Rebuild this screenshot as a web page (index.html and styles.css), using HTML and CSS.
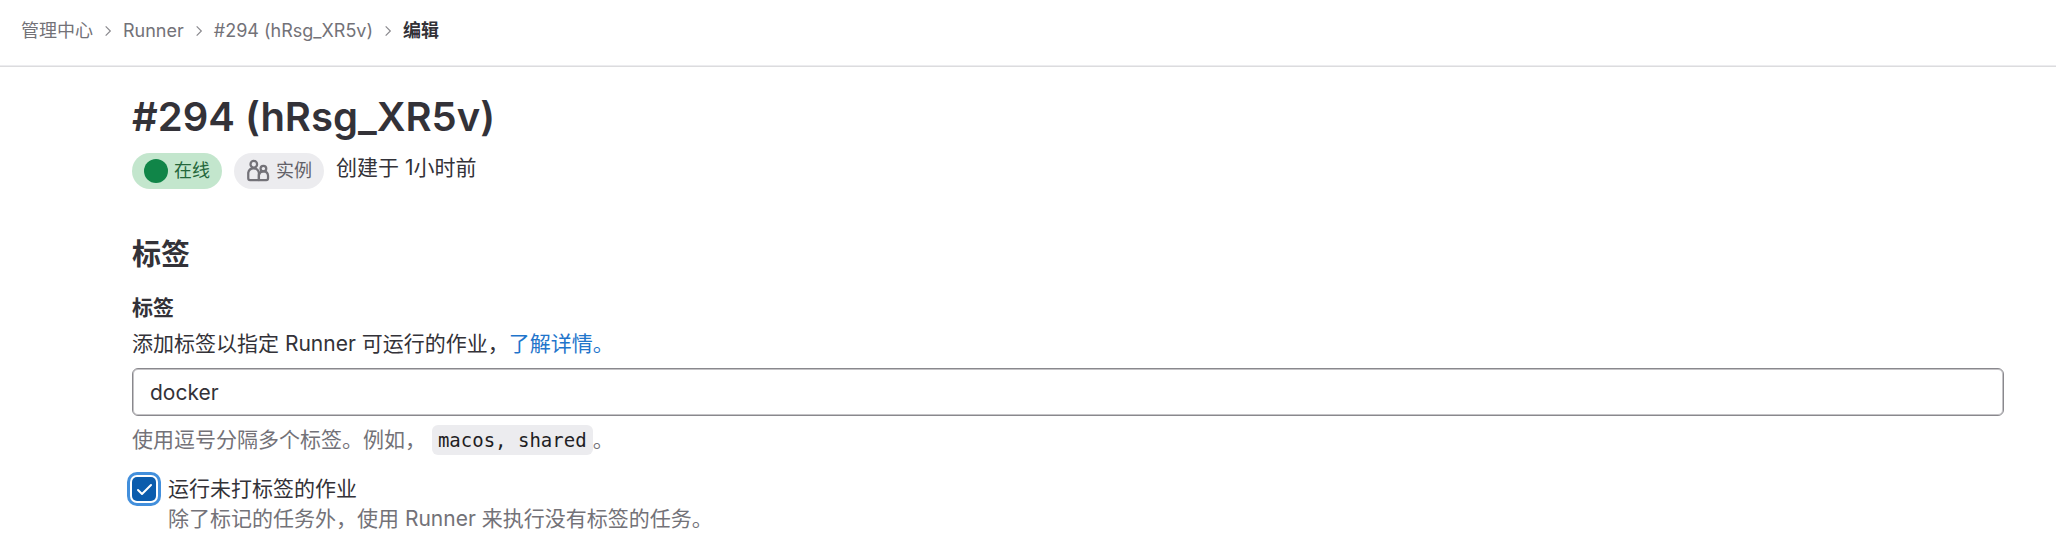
FILE: index.html
```html
<!DOCTYPE html>
<html lang="zh-CN">
<head>
    <meta charset="UTF-8">
    <meta name="viewport" content="width=device-width, initial-scale=1.0">
    <title>编辑 · #294 (hRsg_XR5v) · 管理中心</title>
    <link rel="stylesheet" href="styles.css">
</head>
<body>
    <header class="top-bar">
        <nav aria-label="面包屑">
            <ol class="breadcrumbs">
                <li><a href="#">管理中心</a></li>
                <li>
                    <svg class="chevron" viewBox="0 0 12 12" aria-hidden="true"><path d="M4 2l4 4-4 4"/></svg>
                    <a href="#">Runner</a>
                </li>
                <li>
                    <svg class="chevron" viewBox="0 0 12 12" aria-hidden="true"><path d="M4 2l4 4-4 4"/></svg>
                    <a href="#">#294 (hRsg_XR5v)</a>
                </li>
                <li>
                    <svg class="chevron" viewBox="0 0 12 12" aria-hidden="true"><path d="M4 2l4 4-4 4"/></svg>
                    <a class="current" href="#" aria-current="page">编辑</a>
                </li>
            </ol>
        </nav>
    </header>

    <main class="content">
        <h1>#294 (hRsg_XR5v)</h1>
        <div class="runner-meta">
            <span class="badge badge-success">
                <svg viewBox="0 0 16 16" aria-hidden="true"><circle cx="8" cy="8" r="8" fill="#108548"/></svg>
                在线
            </span>
            <span class="badge badge-muted">
                <svg viewBox="0 0 16 16" fill="none" stroke="#737278" stroke-width="1.5" stroke-linejoin="round" aria-hidden="true">
                    <circle cx="5.2" cy="3.5" r="2.2"/>
                    <path d="M8.6 14H2.700a1.200 1.200 0 0 1-1.200-1.200V9.200a3.600 3.600 0 0 1 7.100 0z"/>
                    <circle cx="11.600" cy="6.400" r="1.900"/>
                    <path d="M8.600 14h4.900a1.200 1.200 0 0 0 1.200-1.200v-1.600a3.100 3.100 0 0 0-6.100-.6z"/>
                </svg>
                实例
            </span>
            <span class="created">创建于 1小时前</span>
        </div>

        <form>
            <h2>标签</h2>
            <div class="form-group">
                <label class="form-label" for="tags">标签</label>
                <p class="form-help">添加标签以指定 Runner 可运行的作业，<a href="#">了解详情。</a></p>
                <input class="form-input" type="text" id="tags" value="docker">
                <p class="form-text">使用逗号分隔多个标签。例如， <code>macos, shared</code>。</p>
            </div>
            <div class="checkbox">
                <input type="checkbox" id="untagged" aria-describedby="untagged-help" checked>
                <div>
                    <label for="untagged">运行未打标签的作业</label>
                    <p id="untagged-help">除了标记的任务外，使用 Runner 来执行没有标签的任务。</p>
                </div>
            </div>
        </form>
    </main>
</body>
</html>
```

FILE: styles.css
```css
* {
    box-sizing: border-box;
}

body {
    margin: 0;
    background-color: #fff;
    color: #333238;
    font-family: Inter, "Noto Sans CJK SC", sans-serif;
    font-size: 21px;
    line-height: 30px;
}

h1, h2, p {
    margin: 0;
}

a {
    color: #1f75cb;
    text-decoration: none;
}

/* Breadcrumbs */
.top-bar {
    padding: 16px 21px 20px;
    border-bottom: 1px solid #dcdcde;
    box-shadow: inset 0 -1px #ececef;
}

.breadcrumbs {
    display: flex;
    margin: 0;
    padding: 0;
    list-style: none;
    font-size: 18px;
}

.breadcrumbs li {
    display: flex;
    align-items: center;
}

.breadcrumbs a {
    color: #737278;
}

.breadcrumbs .current {
    color: #333238;
    font-weight: 600;
}

.chevron {
    width: 14px;
    height: 14px;
    margin: 0 8px;
    fill: none;
    stroke: #89888d;
    stroke-width: 1;
}

.content {
    padding: 24px 52px 24px 132px;
}

h1 {
    font-size: 40px;
    line-height: 52px;
    font-weight: 600;
}

.runner-meta {
    display: flex;
    align-items: flex-start;
    gap: 12px;
    margin-top: 10px;
}

.badge {
    display: inline-flex;
    align-items: center;
    gap: 6px;
    height: 36px;
    padding: 0 12px;
    border-radius: 18px;
    font-size: 18px;
}

.badge svg {
    width: 24px;
    height: 24px;
}

.badge-success {
    background-color: #c3e6cd;
    color: #24663b;
}

.badge-muted {
    background-color: #ececef;
    color: #626168;
}

/* Form */
h2 {
    margin-top: 48px;
    font-size: 29px;
    line-height: 36px;
    font-weight: 600;
}

.form-group {
    margin-top: 20px;
}

.form-label {
    display: block;
    font-weight: 600;
}

.form-help {
    margin-top: 6px;
}

.form-input {
    display: block;
    width: 100%;
    height: 48px;
    margin-top: 9px;
    padding: 0 17px;
    border: 1px solid #89888d;
    border-radius: 6px;
    background-color: #fff;
    box-shadow: inset 0 0 0 1px #c4c3c6;
    color: #333238;
    font: inherit;
}

.form-text {
    margin-top: 9px;
    color: #737278;
}

code {
    padding: 4px 6px;
    border-radius: 6px;
    background-color: #ececef;
    color: #1f1e24;
    font-family: "DejaVu Sans Mono", monospace;
    font-size: 19px;
}

.checkbox {
    display: flex;
    gap: 12px;
    margin-top: 19px;
}

.checkbox input {
    appearance: none;
    flex: none;
    width: 24px;
    height: 24px;
    margin: 3px 0 0;
    border-radius: 5px;
    background: #0b5cad url("data:image/svg+xml,%3Csvg xmlns='http://www.w3.org/2000/svg' viewBox='0 0 24 24'%3E%3Cpath d='M6 13l4 4 9-9' fill='none' stroke='%23fff' stroke-width='2' stroke-linecap='round' stroke-linejoin='round'/%3E%3C/svg%3E") center / 24px no-repeat;
    box-shadow: 0 0 0 2px #fff, 0 0 0 5px #428fdc;
}

.checkbox label {
    display: block;
}

.checkbox p {
    color: #737278;
}
```
